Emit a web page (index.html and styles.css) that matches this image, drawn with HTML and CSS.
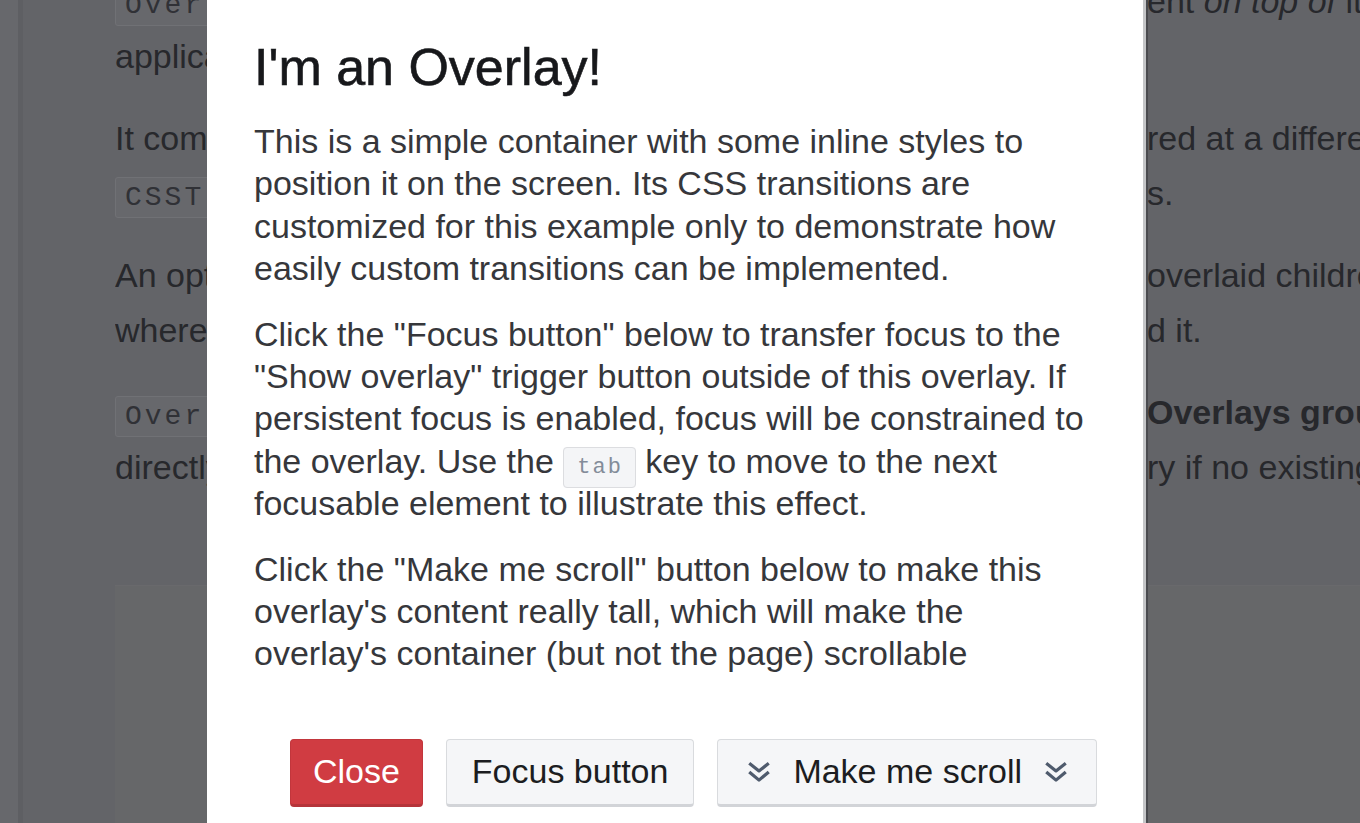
FILE: index.html
```html
<!DOCTYPE html>
<html lang="en">
<head>
    <meta charset="UTF-8">
    <meta name="viewport" content="width=device-width, initial-scale=1.0">
    <title>Overlay</title>
    <link rel="stylesheet" href="styles.css">
</head>
<body>

<div class="page">
    <div class="sidebar"></div>
    <div class="doc">
        <p class="para">
            <span class="row"><span class="start"><code>Overlay</code> is a generic low-level component for rendering cont</span><span class="end">ent <em>on top of</em> its siblings, or above the entire</span></span>
            <span class="row"><span class="start">application.</span></span>
        </p>
        <p class="para">
            <span class="row"><span class="start">It combines a Portal, which allows JSX children to be rende</span><span class="end">red at a different location in the DOM tree, with a</span></span>
            <span class="row"><span class="start"><code>CSSTransitionGroup</code> to support elegant enter and leave animation</span><span class="end">s.</span></span>
        </p>
        <p class="para">
            <span class="row"><span class="start">An optional backdrop element can be inserted behind the</span><span class="end">overlaid children to provide modal behavior,</span></span>
            <span class="row"><span class="start">whereby the overlay prevents interaction with anything behin</span><span class="end">d it.</span></span>
        </p>
        <p class="para">
            <span class="row"><span class="start"><code>Overlay</code> is the backbone of all the components listed in the</span><span class="end"><strong>Overlays group</strong> in the sidebar. Using</span></span>
            <span class="row"><span class="start">directly should be rare in your app; it should only be necessa</span><span class="end">ry if no existing component meets your needs.</span></span>
        </p>
        <div class="demo"></div>
    </div>
</div>

<div class="overlay">
    <h1>I'm an Overlay!</h1>
    <p>This is a simple container with some inline styles to position it on the screen. Its CSS transitions are customized for this example only to demonstrate how easily custom transitions can be implemented.</p>
    <p>Click the "Focus button" below to transfer focus to the "Show overlay" trigger button outside of this overlay. If persistent focus is enabled, focus will be constrained to the overlay. Use the <code>tab</code> key to move to the next focusable element to illustrate this effect.</p>
    <p>Click the "Make me scroll" button below to make this overlay's content really tall, which will make the overlay's container (but not the page) scrollable</p>
    <div class="actions">
        <button class="btn danger">Close</button>
        <button class="btn">Focus button</button>
        <button class="btn scroll">
            <svg class="icon" viewBox="0 0 24 22"><path d="M3 3 L12 10 L21 3 M3 11 L12 18.5 L21 11"/></svg>
            Make me scroll
            <svg class="icon" viewBox="0 0 24 22"><path d="M3 3 L12 10 L21 3 M3 11 L12 18.5 L21 11"/></svg>
        </button>
    </div>
</div>

</body>
</html>
```

FILE: styles.css
```css
body {
    margin: 0;
    font-family: "Liberation Sans", Arial, sans-serif;
    background-color: #636468;
    overflow: hidden;
    height: 823px;
}
.page {
    display: flex;
    height: 100%;
}
.sidebar {
    width: 18px;
    background-color: #67686c;
    border-right: 5px solid #5e5f63;
    flex-shrink: 0;
}
.doc {
    flex: 1;
    padding-left: 92px;
    margin-top: -26px;
    font-size: 34px;
    color: #27282c;
}
.para {
    margin: 0 0 27px;
}
.row {
    display: grid;
    grid-template-columns: 1032px auto;
    align-items: baseline;
    height: 55px;
    line-height: 55px;
    white-space: nowrap;
}
.start {
    overflow: hidden;
}
.doc code {
    font-family: "Liberation Mono", monospace;
    font-size: 28px;
    letter-spacing: 3px;
    color: #303136;
    background-color: #67686c;
    border: 1px solid #707175;
    border-radius: 3px;
    padding: 4px 9px;
}
.demo {
    margin-top: 90px;
    height: 240px;
    background-color: #666769;
    border-top: 1px solid #69696c;
}

.overlay {
    position: absolute;
    top: 0;
    left: 207px;
    box-sizing: border-box;
    width: 939px;
    height: 100%;
    padding: 36px 46px 0 47px;
    background-color: #fff;
    border-right: 3px solid #c4c5c7;
    box-shadow: 2px 0 0 #4a4b4f;
    color: #36373b;
}
.overlay h1 {
    margin: 0 0 22px;
    font-size: 52px;
    line-height: 62px;
    font-weight: normal;
    color: #17181b;
    -webkit-text-stroke: 0.6px #17181b;
}
.overlay p {
    margin: 0 0 23px;
    font-size: 34px;
    line-height: 42.4px;
}
.overlay code {
    font-family: "Liberation Mono", monospace;
    font-size: 22px;
    line-height: 1;
    letter-spacing: 2px;
    color: #838c99;
    background-color: #f4f5f7;
    border: 1px solid #dcdde0;
    border-radius: 4px;
    padding: 7px 12px 7px 13px;
}
.actions {
    display: flex;
    justify-content: flex-end;
    gap: 23px;
    margin-top: 64px;
}
.btn {
    display: flex;
    align-items: center;
    height: 68px;
    padding: 0 25px;
    font-family: "Liberation Sans", Arial, sans-serif;
    font-size: 34px;
    color: #1c1d21;
    background-color: #f5f6f8;
    border: 1px solid #d9dbde;
    border-bottom: 3px solid #d2d4d8;
    border-radius: 4px;
    cursor: pointer;
}
.btn.danger {
    padding: 0 22px;
    color: #fff;
    background-color: #d03c42;
    border-color: #c2363c;
    border-bottom-color: #b5343a;
}
.btn.scroll {
    padding: 0 27px 0 28px;
    gap: 21px;
}
.icon {
    width: 26px;
    height: 24px;
    fill: none;
    stroke: #4f5b6d;
    stroke-width: 3;
    stroke-linejoin: round;
}
```
